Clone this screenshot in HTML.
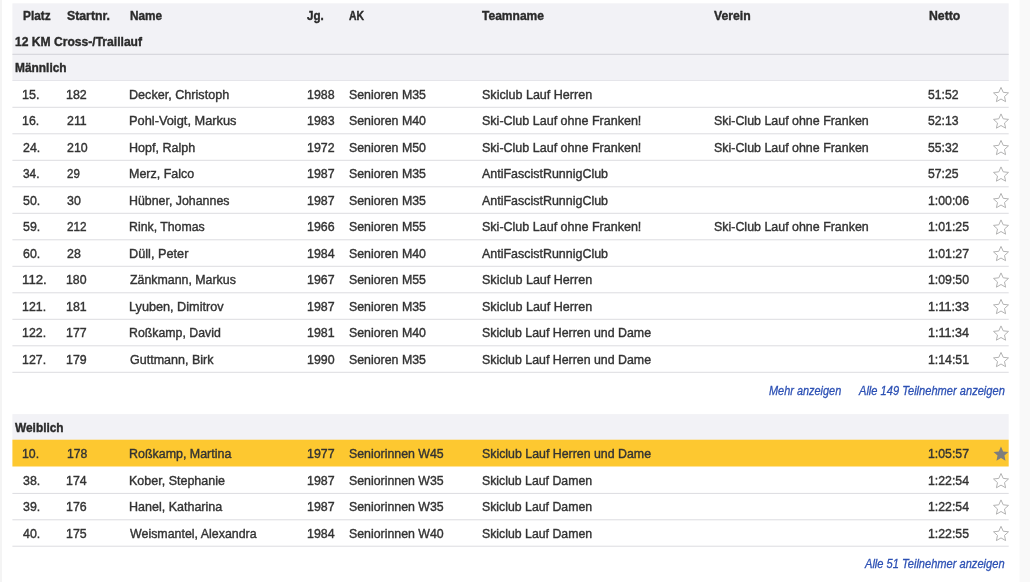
<!DOCTYPE html>
<html lang="de">
<head>
<meta charset="utf-8">
<title>Ergebnisse</title>
<style>
html,body{margin:0;padding:0;background:#fff;}
body{width:1030px;height:582px;position:relative;overflow:hidden;font-family:"Liberation Sans",sans-serif;}
.L{position:absolute;left:0;top:0;width:1030px;height:27px;will-change:transform;}
.B{position:absolute;left:0;top:0;width:1000px;height:100px;transform-origin:0 0;will-change:transform;}
.r,.b,.i{position:absolute;top:4px;white-space:nowrap;line-height:20px;height:20px;transform-origin:0 0;}
.r{font-size:13.2px;color:#333;-webkit-text-stroke:0.4px #333;}
.b{font-size:13.1px;font-weight:bold;color:#2b2b2b;-webkit-text-stroke:0.4px #2b2b2b;}
.i{font-size:13.0px;font-style:italic;color:#2c50b4;-webkit-text-stroke:0.3px #2c50b4;}
.s{position:absolute;width:16px;height:16px;left:992.7px;top:6.3px;overflow:visible;}
.s path{fill:none;stroke:#b2b2b2;stroke-width:1;}

</style>
</head>
<body>
<div class="B" style="background:#f4f4f4;transform:translate3d(0.00px,0.00px,0) scale(0.00180,5.82000)"></div>
<div class="B" style="background:#f9f9f9;transform:translate3d(1019.50px,0.00px,0) scale(0.01050,5.82000)"></div>
<div class="B" style="background:#f2f2f6;transform:translate3d(12.40px,3.30px,0) scale(0.99630,0.77500)"></div>
<div class="B" style="background:#d2d2d8;transform:translate3d(12.40px,53.80px,0) scale(0.99630,0.01000)"></div>
<div class="B" style="background:#e1e1e6;transform:translate3d(12.40px,80.10px,0) scale(0.99630,0.00800)"></div>
<div class="B" style="background:#f2f2f6;transform:translate3d(12.40px,414.10px,0) scale(0.99630,0.25700)"></div>
<div class="B" style="background:#fdc830;transform:translate3d(12.40px,439.70px,0) scale(0.99630,0.26800)"></div>
<div class="B" style="background:#dcdce0;transform:translate3d(12.40px,106.80px,0) scale(0.99630,0.01000)"></div>
<div class="B" style="background:#dcdce0;transform:translate3d(12.40px,133.30px,0) scale(0.99630,0.01000)"></div>
<div class="B" style="background:#dcdce0;transform:translate3d(12.40px,159.80px,0) scale(0.99630,0.01000)"></div>
<div class="B" style="background:#dcdce0;transform:translate3d(12.40px,186.30px,0) scale(0.99630,0.01000)"></div>
<div class="B" style="background:#dcdce0;transform:translate3d(12.40px,212.80px,0) scale(0.99630,0.01000)"></div>
<div class="B" style="background:#dcdce0;transform:translate3d(12.40px,239.30px,0) scale(0.99630,0.01000)"></div>
<div class="B" style="background:#dcdce0;transform:translate3d(12.40px,265.80px,0) scale(0.99630,0.01000)"></div>
<div class="B" style="background:#dcdce0;transform:translate3d(12.40px,292.30px,0) scale(0.99630,0.01000)"></div>
<div class="B" style="background:#dcdce0;transform:translate3d(12.40px,318.80px,0) scale(0.99630,0.01000)"></div>
<div class="B" style="background:#dcdce0;transform:translate3d(12.40px,345.30px,0) scale(0.99630,0.01000)"></div>
<div class="B" style="background:#dcdce0;transform:translate3d(12.40px,371.80px,0) scale(0.99630,0.01000)"></div>
<div class="B" style="background:#dcdce0;transform:translate3d(12.40px,492.90px,0) scale(0.99630,0.01000)"></div>
<div class="B" style="background:#dcdce0;transform:translate3d(12.40px,519.30px,0) scale(0.99630,0.01000)"></div>
<div class="B" style="background:#dcdce0;transform:translate3d(12.40px,545.70px,0) scale(0.99630,0.01000)"></div>
<div class="L" style="transform:translate3d(0,2.30px,0)">
<span class="b" style="left:22.90px;transform:scaleX(0.9028)">Platz</span>
<span class="b" style="left:66.80px;transform:scaleX(0.9380)">Startnr.</span>
<span class="b" style="left:129.80px;transform:scaleX(0.8988)">Name</span>
<span class="b" style="left:307.30px;transform:scaleX(0.8862)">Jg.</span>
<span class="b" style="left:348.60px;transform:scaleX(0.7967)">AK</span>
<span class="b" style="left:481.70px;transform:scaleX(0.9188)">Teamname</span>
<span class="b" style="left:714.10px;transform:scaleX(0.9336)">Verein</span>
<span class="b" style="left:928.80px;transform:scaleX(0.9355)">Netto</span>
</div>
<div class="L" style="transform:translate3d(0,27.80px,0)">
<span class="b" style="left:14.80px;transform:scaleX(0.9236)">12 KM Cross-/Traillauf</span>
</div>
<div class="L" style="transform:translate3d(0,54.30px,0)">
<span class="b" style="left:14.80px;transform:scaleX(0.9094)">Männlich</span>
</div>
<div class="L" style="transform:translate3d(0,413.80px,0)">
<span class="b" style="left:14.90px;transform:scaleX(0.9068)">Weiblich</span>
</div>
<div class="L" style="transform:translate3d(0,80.80px,0)">
<span class="r" style="left:22.25px;transform:scaleX(0.9539)">15.</span>
<span class="r" style="left:65.96px;transform:scaleX(0.9435)">182</span>
<span class="r" style="left:128.54px;transform:scaleX(0.9558)">Decker, Christoph</span>
<span class="r" style="left:307.06px;transform:scaleX(0.9392)">1988</span>
<span class="r" style="left:348.90px;transform:scaleX(0.9367)">Senioren M35</span>
<span class="r" style="left:481.70px;transform:scaleX(0.9508)">Skiclub Lauf Herren</span>
<span class="r" style="left:928.30px;transform:scaleX(0.9245)">51:52</span>
<svg class="s" viewBox="0 0 16 16"><path d="M8 0.6 L10.2 5.5 L15.5 6.1 L11.5 9.7 L12.6 14.9 L8 12.2 L3.4 14.9 L4.5 9.7 L0.5 6.1 L5.8 5.5 Z"/></svg>
</div>
<div class="L" style="transform:translate3d(0,107.30px,0)">
<span class="r" style="left:22.26px;transform:scaleX(0.9385)">16.</span>
<span class="r" style="left:67.00px;transform:scaleX(0.9385)">211</span>
<span class="r" style="left:128.53px;transform:scaleX(0.9711)">Pohl-Voigt, Markus</span>
<span class="r" style="left:307.06px;transform:scaleX(0.9392)">1983</span>
<span class="r" style="left:348.90px;transform:scaleX(0.9367)">Senioren M40</span>
<span class="r" style="left:481.70px;transform:scaleX(0.9491)">Ski-Club Lauf ohne Franken!</span>
<span class="r" style="left:714.30px;transform:scaleX(0.9422)">Ski-Club Lauf ohne Franken</span>
<span class="r" style="left:928.30px;transform:scaleX(0.9245)">52:13</span>
<svg class="s" viewBox="0 0 16 16"><path d="M8 0.6 L10.2 5.5 L15.5 6.1 L11.5 9.7 L12.6 14.9 L8 12.2 L3.4 14.9 L4.5 9.7 L0.5 6.1 L5.8 5.5 Z"/></svg>
</div>
<div class="L" style="transform:translate3d(0,133.80px,0)">
<span class="r" style="left:23.20px;transform:scaleX(0.9385)">24.</span>
<span class="r" style="left:67.00px;transform:scaleX(0.9385)">210</span>
<span class="r" style="left:128.55px;transform:scaleX(0.9501)">Hopf, Ralph</span>
<span class="r" style="left:307.06px;transform:scaleX(0.9392)">1972</span>
<span class="r" style="left:348.90px;transform:scaleX(0.9367)">Senioren M50</span>
<span class="r" style="left:481.70px;transform:scaleX(0.9491)">Ski-Club Lauf ohne Franken!</span>
<span class="r" style="left:714.30px;transform:scaleX(0.9422)">Ski-Club Lauf ohne Franken</span>
<span class="r" style="left:928.30px;transform:scaleX(0.9245)">55:32</span>
<svg class="s" viewBox="0 0 16 16"><path d="M8 0.6 L10.2 5.5 L15.5 6.1 L11.5 9.7 L12.6 14.9 L8 12.2 L3.4 14.9 L4.5 9.7 L0.5 6.1 L5.8 5.5 Z"/></svg>
</div>
<div class="L" style="transform:translate3d(0,160.30px,0)">
<span class="r" style="left:23.05px;transform:scaleX(0.8971)">34.</span>
<span class="r" style="left:66.90px;transform:scaleX(0.8720)">29</span>
<span class="r" style="left:128.55px;transform:scaleX(0.9460)">Merz, Falco</span>
<span class="r" style="left:307.06px;transform:scaleX(0.9392)">1987</span>
<span class="r" style="left:348.90px;transform:scaleX(0.9367)">Senioren M35</span>
<span class="r" style="left:481.70px;transform:scaleX(0.9446)">AntiFascistRunnigClub</span>
<span class="r" style="left:928.30px;transform:scaleX(0.9245)">57:25</span>
<svg class="s" viewBox="0 0 16 16"><path d="M8 0.6 L10.2 5.5 L15.5 6.1 L11.5 9.7 L12.6 14.9 L8 12.2 L3.4 14.9 L4.5 9.7 L0.5 6.1 L5.8 5.5 Z"/></svg>
</div>
<div class="L" style="transform:translate3d(0,186.80px,0)">
<span class="r" style="left:23.20px;transform:scaleX(0.9385)">50.</span>
<span class="r" style="left:67.00px;transform:scaleX(0.9385)">30</span>
<span class="r" style="left:128.56px;transform:scaleX(0.9385)">Hübner, Johannes</span>
<span class="r" style="left:307.06px;transform:scaleX(0.9392)">1987</span>
<span class="r" style="left:348.90px;transform:scaleX(0.9367)">Senioren M35</span>
<span class="r" style="left:481.70px;transform:scaleX(0.9446)">AntiFascistRunnigClub</span>
<span class="r" style="left:927.97px;transform:scaleX(0.9329)">1:00:06</span>
<svg class="s" viewBox="0 0 16 16"><path d="M8 0.6 L10.2 5.5 L15.5 6.1 L11.5 9.7 L12.6 14.9 L8 12.2 L3.4 14.9 L4.5 9.7 L0.5 6.1 L5.8 5.5 Z"/></svg>
</div>
<div class="L" style="transform:translate3d(0,213.30px,0)">
<span class="r" style="left:23.20px;transform:scaleX(0.9385)">59.</span>
<span class="r" style="left:66.90px;transform:scaleX(0.8907)">212</span>
<span class="r" style="left:128.57px;transform:scaleX(0.9337)">Rink, Thomas</span>
<span class="r" style="left:307.06px;transform:scaleX(0.9392)">1966</span>
<span class="r" style="left:348.90px;transform:scaleX(0.9367)">Senioren M55</span>
<span class="r" style="left:481.70px;transform:scaleX(0.9491)">Ski-Club Lauf ohne Franken!</span>
<span class="r" style="left:714.30px;transform:scaleX(0.9422)">Ski-Club Lauf ohne Franken</span>
<span class="r" style="left:927.97px;transform:scaleX(0.9329)">1:01:25</span>
<svg class="s" viewBox="0 0 16 16"><path d="M8 0.6 L10.2 5.5 L15.5 6.1 L11.5 9.7 L12.6 14.9 L8 12.2 L3.4 14.9 L4.5 9.7 L0.5 6.1 L5.8 5.5 Z"/></svg>
</div>
<div class="L" style="transform:translate3d(0,239.80px,0)">
<span class="r" style="left:23.20px;transform:scaleX(0.9385)">60.</span>
<span class="r" style="left:67.00px;transform:scaleX(0.9385)">28</span>
<span class="r" style="left:128.54px;transform:scaleX(0.9645)">Düll, Peter</span>
<span class="r" style="left:307.06px;transform:scaleX(0.9392)">1984</span>
<span class="r" style="left:348.90px;transform:scaleX(0.9367)">Senioren M40</span>
<span class="r" style="left:481.70px;transform:scaleX(0.9446)">AntiFascistRunnigClub</span>
<span class="r" style="left:927.97px;transform:scaleX(0.9329)">1:01:27</span>
<svg class="s" viewBox="0 0 16 16"><path d="M8 0.6 L10.2 5.5 L15.5 6.1 L11.5 9.7 L12.6 14.9 L8 12.2 L3.4 14.9 L4.5 9.7 L0.5 6.1 L5.8 5.5 Z"/></svg>
</div>
<div class="L" style="transform:translate3d(0,266.30px,0)">
<span class="r" style="left:22.40px;transform:scaleX(1.0033)">112.</span>
<span class="r" style="left:65.97px;transform:scaleX(0.9338)">180</span>
<span class="r" style="left:129.50px;transform:scaleX(0.9376)">Zänkmann, Markus</span>
<span class="r" style="left:307.06px;transform:scaleX(0.9392)">1967</span>
<span class="r" style="left:348.90px;transform:scaleX(0.9367)">Senioren M55</span>
<span class="r" style="left:481.70px;transform:scaleX(0.9508)">Skiclub Lauf Herren</span>
<span class="r" style="left:927.97px;transform:scaleX(0.9329)">1:09:50</span>
<svg class="s" viewBox="0 0 16 16"><path d="M8 0.6 L10.2 5.5 L15.5 6.1 L11.5 9.7 L12.6 14.9 L8 12.2 L3.4 14.9 L4.5 9.7 L0.5 6.1 L5.8 5.5 Z"/></svg>
</div>
<div class="L" style="transform:translate3d(0,292.80px,0)">
<span class="r" style="left:22.26px;transform:scaleX(0.9385)">121.</span>
<span class="r" style="left:66.06px;transform:scaleX(0.9385)">181</span>
<span class="r" style="left:128.54px;transform:scaleX(0.9605)">Lyuben, Dimitrov</span>
<span class="r" style="left:307.06px;transform:scaleX(0.9392)">1987</span>
<span class="r" style="left:348.90px;transform:scaleX(0.9367)">Senioren M35</span>
<span class="r" style="left:481.70px;transform:scaleX(0.9508)">Skiclub Lauf Herren</span>
<span class="r" style="left:927.95px;transform:scaleX(0.9548)">1:11:33</span>
<svg class="s" viewBox="0 0 16 16"><path d="M8 0.6 L10.2 5.5 L15.5 6.1 L11.5 9.7 L12.6 14.9 L8 12.2 L3.4 14.9 L4.5 9.7 L0.5 6.1 L5.8 5.5 Z"/></svg>
</div>
<div class="L" style="transform:translate3d(0,319.30px,0)">
<span class="r" style="left:22.26px;transform:scaleX(0.9385)">122.</span>
<span class="r" style="left:66.06px;transform:scaleX(0.9385)">177</span>
<span class="r" style="left:128.57px;transform:scaleX(0.9342)">Roßkamp, David</span>
<span class="r" style="left:307.06px;transform:scaleX(0.9392)">1981</span>
<span class="r" style="left:348.90px;transform:scaleX(0.9367)">Senioren M40</span>
<span class="r" style="left:481.70px;transform:scaleX(0.9373)">Skiclub Lauf Herren und Dame</span>
<span class="r" style="left:927.95px;transform:scaleX(0.9548)">1:11:34</span>
<svg class="s" viewBox="0 0 16 16"><path d="M8 0.6 L10.2 5.5 L15.5 6.1 L11.5 9.7 L12.6 14.9 L8 12.2 L3.4 14.9 L4.5 9.7 L0.5 6.1 L5.8 5.5 Z"/></svg>
</div>
<div class="L" style="transform:translate3d(0,345.80px,0)">
<span class="r" style="left:22.26px;transform:scaleX(0.9385)">127.</span>
<span class="r" style="left:66.06px;transform:scaleX(0.9385)">179</span>
<span class="r" style="left:129.50px;transform:scaleX(0.9485)">Guttmann, Birk</span>
<span class="r" style="left:307.06px;transform:scaleX(0.9392)">1990</span>
<span class="r" style="left:348.90px;transform:scaleX(0.9367)">Senioren M35</span>
<span class="r" style="left:481.70px;transform:scaleX(0.9373)">Skiclub Lauf Herren und Dame</span>
<span class="r" style="left:927.97px;transform:scaleX(0.9329)">1:14:51</span>
<svg class="s" viewBox="0 0 16 16"><path d="M8 0.6 L10.2 5.5 L15.5 6.1 L11.5 9.7 L12.6 14.9 L8 12.2 L3.4 14.9 L4.5 9.7 L0.5 6.1 L5.8 5.5 Z"/></svg>
</div>
<div class="L" style="transform:translate3d(0,439.60px,0)">
<span class="r" style="left:22.36px;transform:scaleX(0.9359)">10.</span>
<span class="r" style="left:66.68px;transform:scaleX(0.9241)">178</span>
<span class="r" style="left:128.56px;transform:scaleX(0.9433)">Roßkamp, Martina</span>
<span class="r" style="left:307.06px;transform:scaleX(0.9392)">1977</span>
<span class="r" style="left:348.90px;transform:scaleX(0.9362)">Seniorinnen W45</span>
<span class="r" style="left:481.70px;transform:scaleX(0.9373)">Skiclub Lauf Herren und Dame</span>
<span class="r" style="left:927.97px;transform:scaleX(0.9329)">1:05:57</span>
<svg class="s" viewBox="0 0 16 16"><path d="M8 0.6 L10.2 5.5 L15.5 6.1 L11.5 9.7 L12.6 14.9 L8 12.2 L3.4 14.9 L4.5 9.7 L0.5 6.1 L5.8 5.5 Z" style="fill:#7d7d7d;stroke:none" transform="translate(0.1,0.4) scale(0.985)"/></svg>
</div>
<div class="L" style="transform:translate3d(0,466.90px,0)">
<span class="r" style="left:23.20px;transform:scaleX(0.9385)">38.</span>
<span class="r" style="left:66.06px;transform:scaleX(0.9385)">174</span>
<span class="r" style="left:128.55px;transform:scaleX(0.9484)">Kober, Stephanie</span>
<span class="r" style="left:307.06px;transform:scaleX(0.9392)">1987</span>
<span class="r" style="left:348.90px;transform:scaleX(0.9362)">Seniorinnen W35</span>
<span class="r" style="left:481.70px;transform:scaleX(0.9330)">Skiclub Lauf Damen</span>
<span class="r" style="left:927.97px;transform:scaleX(0.9329)">1:22:54</span>
<svg class="s" viewBox="0 0 16 16"><path d="M8 0.6 L10.2 5.5 L15.5 6.1 L11.5 9.7 L12.6 14.9 L8 12.2 L3.4 14.9 L4.5 9.7 L0.5 6.1 L5.8 5.5 Z"/></svg>
</div>
<div class="L" style="transform:translate3d(0,493.30px,0)">
<span class="r" style="left:23.20px;transform:scaleX(0.9385)">39.</span>
<span class="r" style="left:66.06px;transform:scaleX(0.9385)">176</span>
<span class="r" style="left:128.55px;transform:scaleX(0.9489)">Hanel, Katharina</span>
<span class="r" style="left:307.06px;transform:scaleX(0.9392)">1987</span>
<span class="r" style="left:348.90px;transform:scaleX(0.9362)">Seniorinnen W35</span>
<span class="r" style="left:481.70px;transform:scaleX(0.9330)">Skiclub Lauf Damen</span>
<span class="r" style="left:927.97px;transform:scaleX(0.9329)">1:22:54</span>
<svg class="s" viewBox="0 0 16 16"><path d="M8 0.6 L10.2 5.5 L15.5 6.1 L11.5 9.7 L12.6 14.9 L8 12.2 L3.4 14.9 L4.5 9.7 L0.5 6.1 L5.8 5.5 Z"/></svg>
</div>
<div class="L" style="transform:translate3d(0,519.70px,0)">
<span class="r" style="left:23.20px;transform:scaleX(0.9385)">40.</span>
<span class="r" style="left:66.06px;transform:scaleX(0.9385)">175</span>
<span class="r" style="left:129.50px;transform:scaleX(0.9403)">Weismantel, Alexandra</span>
<span class="r" style="left:307.06px;transform:scaleX(0.9392)">1984</span>
<span class="r" style="left:348.90px;transform:scaleX(0.9362)">Seniorinnen W40</span>
<span class="r" style="left:481.70px;transform:scaleX(0.9330)">Skiclub Lauf Damen</span>
<span class="r" style="left:927.97px;transform:scaleX(0.9329)">1:22:55</span>
<svg class="s" viewBox="0 0 16 16"><path d="M8 0.6 L10.2 5.5 L15.5 6.1 L11.5 9.7 L12.6 14.9 L8 12.2 L3.4 14.9 L4.5 9.7 L0.5 6.1 L5.8 5.5 Z"/></svg>
</div>
<div class="L" style="transform:translate3d(0,376.80px,0)">
<span class="i" style="left:768.50px;transform:scaleX(0.8395)">Mehr anzeigen</span>
<span class="i" style="left:859.05px;transform:scaleX(0.8539)">Alle 149 Teilnehmer anzeigen</span>
</div>
<div class="L" style="transform:translate3d(0,550.00px,0)">
<span class="i" style="left:865.35px;transform:scaleX(0.8531)">Alle 51 Teilnehmer anzeigen</span>
</div>
</body>
</html>
